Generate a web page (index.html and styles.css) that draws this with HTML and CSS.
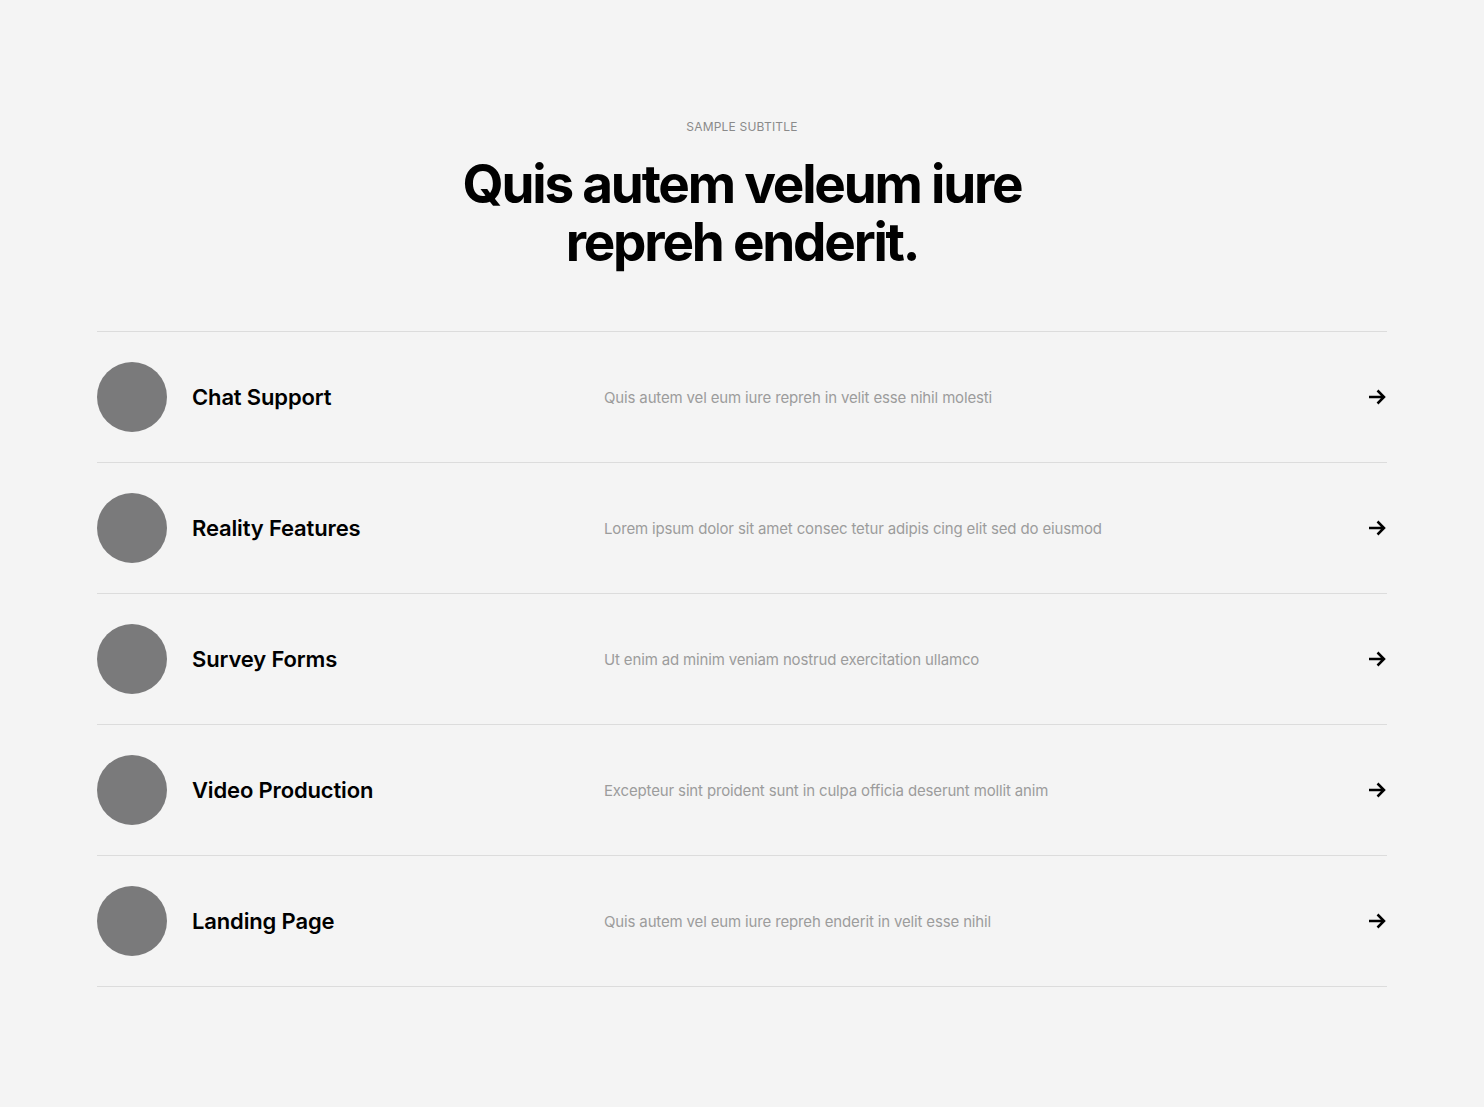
FILE: index.html
```html
<!DOCTYPE html>
<html lang="en">
<head>
<meta charset="utf-8">
<title>Services</title>
<link rel="stylesheet" href="styles.css">
</head>
<body>
<section class="section">
  <header class="head">
    <p class="subtitle">SAMPLE SUBTITLE</p>
    <h1 class="title">Quis autem veleum iure<br>repreh enderit.</h1>
  </header>
  <ul class="list">
    <li class="row">
      <span class="dot"></span>
      <h3 class="name">Chat Support</h3>
      <p class="desc">Quis autem vel eum iure repreh in velit esse nihil molesti</p>
      <svg class="arrow" viewBox="0 0 20 20" width="20" height="20"><path d="M2 10h15M10.5 3.5L17 10l-6.5 6.5" fill="none" stroke="#000" stroke-width="2.5"/></svg>
    </li>
    <li class="row">
      <span class="dot"></span>
      <h3 class="name">Reality Features</h3>
      <p class="desc">Lorem ipsum dolor sit amet consec tetur adipis cing elit sed do eiusmod</p>
      <svg class="arrow" viewBox="0 0 20 20" width="20" height="20"><path d="M2 10h15M10.5 3.5L17 10l-6.5 6.5" fill="none" stroke="#000" stroke-width="2.5"/></svg>
    </li>
    <li class="row">
      <span class="dot"></span>
      <h3 class="name">Survey Forms</h3>
      <p class="desc">Ut enim ad minim veniam nostrud exercitation ullamco</p>
      <svg class="arrow" viewBox="0 0 20 20" width="20" height="20"><path d="M2 10h15M10.5 3.5L17 10l-6.5 6.5" fill="none" stroke="#000" stroke-width="2.5"/></svg>
    </li>
    <li class="row">
      <span class="dot"></span>
      <h3 class="name">Video Production</h3>
      <p class="desc">Excepteur sint proident sunt in culpa officia deserunt mollit anim</p>
      <svg class="arrow" viewBox="0 0 20 20" width="20" height="20"><path d="M2 10h15M10.5 3.5L17 10l-6.5 6.5" fill="none" stroke="#000" stroke-width="2.5"/></svg>
    </li>
    <li class="row">
      <span class="dot"></span>
      <h3 class="name">Landing Page</h3>
      <p class="desc">Quis autem vel eum iure repreh enderit in velit esse nihil</p>
      <svg class="arrow" viewBox="0 0 20 20" width="20" height="20"><path d="M2 10h15M10.5 3.5L17 10l-6.5 6.5" fill="none" stroke="#000" stroke-width="2.5"/></svg>
    </li>
  </ul>
</section>
</body>
</html>
```

FILE: styles.css
```css
* { box-sizing: border-box; }
html, body { margin: 0; padding: 0; }
body {
  background: #f4f4f4;
  font-family: Inter, "Noto Sans", "Liberation Sans", sans-serif;
  color: #000;
}
.section {
  width: 1290px;
  margin: 0 auto;
  padding: 119px 0 120px;
}
.head { text-align: center; }
.subtitle {
  margin: 0;
  font-size: 12px;
  line-height: 16px;
  color: #8a8a8a;
  letter-spacing: 0.2px;
}
.title {
  margin: 20px 0 0;
  font-size: 53px;
  line-height: 58px;
  font-weight: 700;
  letter-spacing: -2.2px;
}
.list {
  list-style: none;
  margin: 60px 0 0;
  padding: 0;
  border-top: 1px solid #dcdcdc;
}
.row {
  display: grid;
  grid-template-columns: 70px 412px 1fr 20px;
  column-gap: 25px;
  align-items: center;
  padding: 30px 0;
  border-bottom: 1px solid #dcdcdc;
}
.row > .desc { margin-left: -25px; }
.dot {
  width: 70px;
  height: 70px;
  border-radius: 50%;
  background: #7a7a7b;
}
.name {
  margin: 0;
  font-size: 22px;
  font-weight: 600;
  letter-spacing: -0.15px;
}
.desc {
  margin: 0;
  font-size: 15px;
  color: #9c9c9c;
  letter-spacing: -0.15px;
}
.arrow { justify-self: end; margin-right: 0; }
```
